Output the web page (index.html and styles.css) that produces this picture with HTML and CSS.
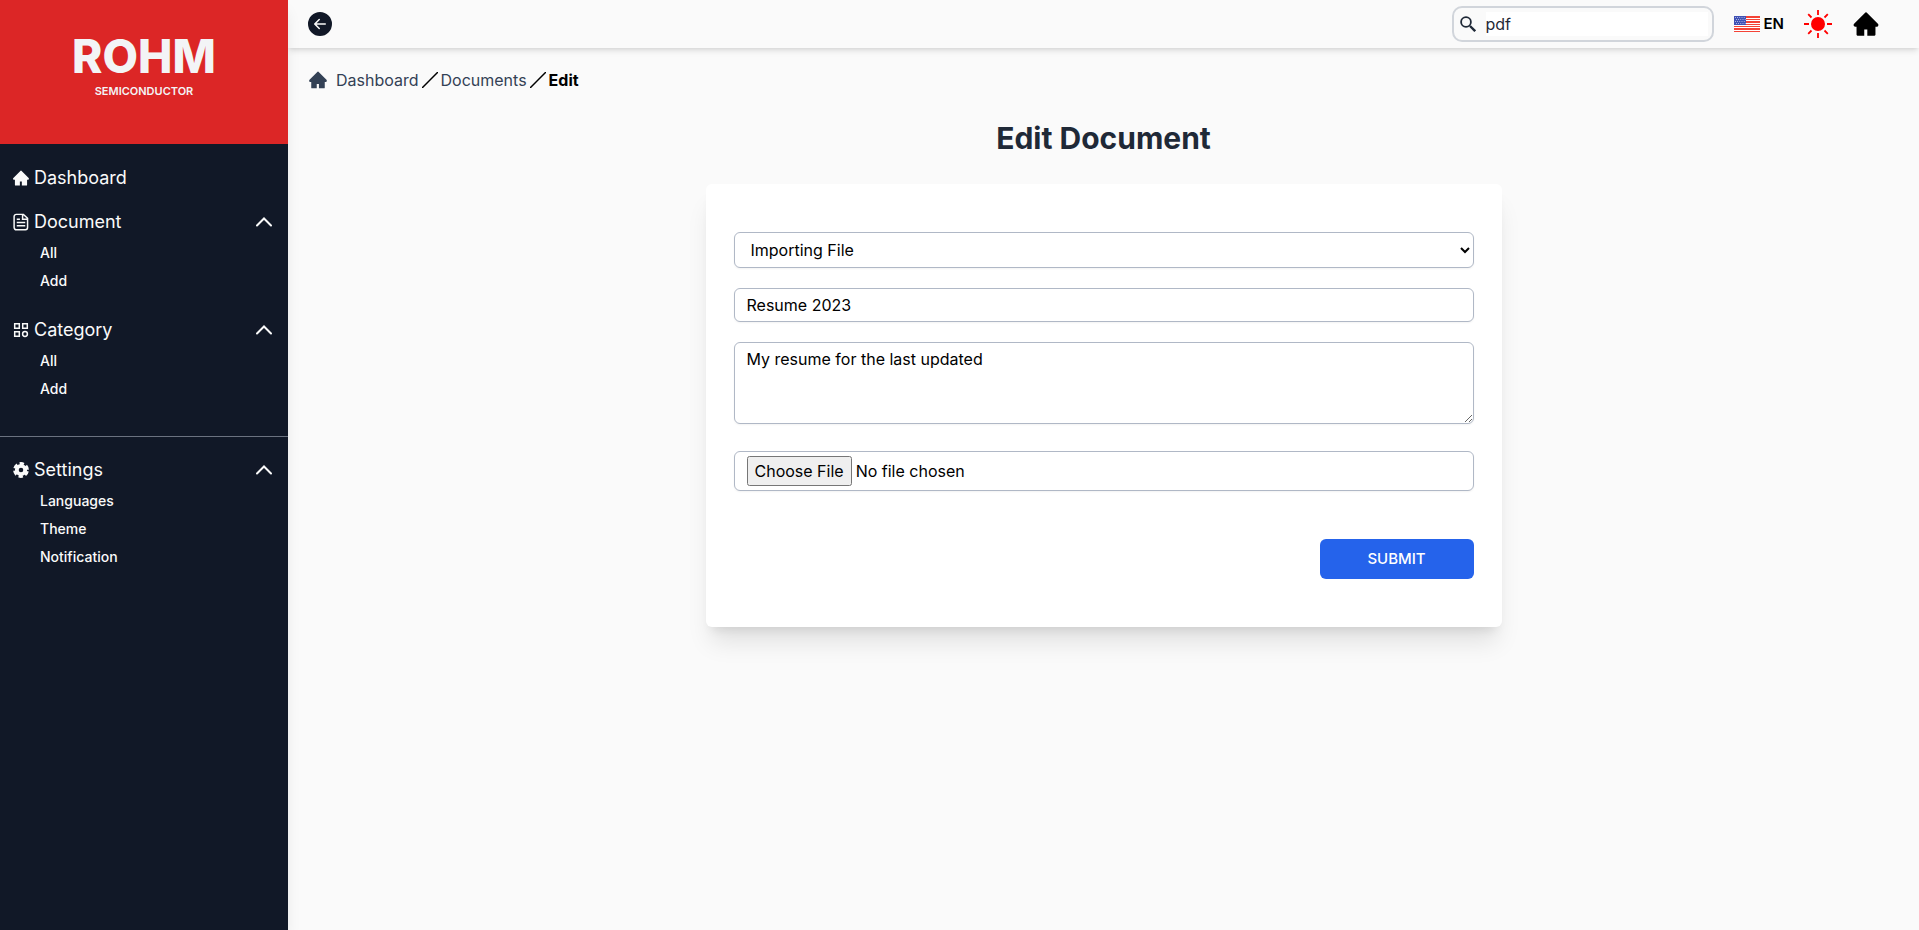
FILE: index.html
```html
<!DOCTYPE html>
<html lang="en">
<head>
<meta charset="utf-8">
<title>Edit Document</title>
<link rel="stylesheet" href="styles.css">
</head>
<body>
<svg class="sprite" aria-hidden="true">
  <symbol id="home" viewBox="0 0 1024 1024"><path d="M946.5 505L534.6 93.4a31.93 31.93 0 0 0-45.2 0L77.5 505c-12 12-18.8 28.3-18.8 45.3 0 35.3 28.7 64 64 64h43.4V908c0 17.7 14.3 32 32 32H448V716h112v224h265.9c17.7 0 32-14.3 32-32V614.3h43.4c17 0 33.3-6.7 45.3-18.8 24.9-25 24.9-65.5-.1-90.5z"/></symbol>
  <symbol id="chevron" viewBox="0 0 16 10"><path d="M1 8.500 8 1.500l7 7" fill="none" stroke="currentColor" stroke-width="2" stroke-linecap="round"/></symbol>
  <symbol id="slash" viewBox="0 0 16 16"><path d="M0 16 16 0" fill="none" stroke="currentColor" stroke-width="1.500"/></symbol>
</svg>
<div class="app">
  <aside class="sidebar">
    <div class="brand">
      <span class="brand-name">ROHM</span>
      <span class="brand-sub">SEMICONDUCTOR</span>
    </div>
    <nav class="nav">
      <a class="nav-head" href="#"><svg class="nav-icon"><use href="#home"/></svg>Dashboard</a>
      <section class="group">
        <button class="nav-head" type="button">
          <svg class="nav-icon" viewBox="-.5 -.5 17 17" fill="none" stroke="currentColor"><path stroke-width="1.400" d="M3.500.8h6.800L14.200 4.500v8.800a2 2 0 0 1-2 2H3.500a2 2 0 0 1-2-2V2.800a2 2 0 0 1 2-2zM9.500 1v4.300H14M4 5.500h3M4 8.500h8M4 11.500h8"/></svg>Document<svg class="chevron"><use href="#chevron"/></svg>
        </button>
        <ul class="sub"><li><a href="#">All</a></li><li><a href="#">Add</a></li></ul>
      </section>
      <section class="group">
        <button class="nav-head" type="button">
          <svg class="nav-icon" viewBox="-1 -1 18 18" fill="none" stroke="currentColor" stroke-width="1.500"><path d="M1.700 1.700h4.600v4.600H1.700zM9.700 1.700h4.600v4.600H9.700zM1.700 9.700h4.600v4.600H1.700z"/><circle cx="12" cy="12" r="2.400"/></svg>Category<svg class="chevron"><use href="#chevron"/></svg>
        </button>
        <ul class="sub"><li><a href="#">All</a></li><li><a href="#">Add</a></li></ul>
      </section>
    </nav>
    <nav class="nav nav-settings">
      <section class="group">
        <button class="nav-head" type="button">
          <svg class="nav-icon" viewBox="-1 -1 18 18" fill="none" stroke="currentColor"><circle cx="8" cy="8" r="4.200" stroke-width="3.800"/><circle cx="8" cy="8" r="6.300" stroke-width="3.200" stroke-dasharray="4.200 2.398" stroke-dashoffset="-1.200"/></svg>Settings<svg class="chevron"><use href="#chevron"/></svg>
        </button>
        <ul class="sub"><li><a href="#">Languages</a></li><li><a href="#">Theme</a></li><li><a href="#">Notification</a></li></ul>
      </section>
    </nav>
  </aside>
  <div class="page">
    <header class="topbar">
      <button class="icon-btn" type="button" aria-label="Back">
        <svg class="back" viewBox="0 0 16 16"><path d="M8 0a8 8 0 1 0 0 16A8 8 0 0 0 8 0zm3.500 7.500a.5.500 0 0 1 0 1H5.707l2.147 2.146a.5.500 0 0 1-.708.708l-3-3a.5.500 0 0 1 0-.708l3-3a.5.500 0 1 1 .708.708L5.707 7.500H11.500z"/></svg>
      </button>
      <div class="tools">
        <label class="search">
          <svg class="search-icon" viewBox="0 0 16 16" fill="none" stroke="currentColor" stroke-width="1.800"><circle cx="6" cy="6" r="4.900"/><path stroke-width="2.400" d="m10 10 5.200 5.200"/></svg>
          <input type="text" value="pdf" aria-label="Search">
        </label>
        <button class="lang" type="button">
          <svg class="flag" viewBox="0 0 26 16"><path fill="#fff" d="M0 0h26v16H0z"/><path fill="#f44336" d="M0 0h26v2H0zM0 3h26v1H0zM0 5h26v2H0zM0 8h26v1H0zM0 10h26v1H0zM0 12h26v2H0zM0 15h26v1H0z"/><path fill="#3f51b5" d="M0 0h12v9H0z"/><path stroke="#fff" stroke-width=".7" stroke-dasharray=".8 1.400" d="M1 1.500h11M2 3.500h10M1 5.500h11M2 7.500h10"/></svg>EN
        </button>
        <button class="icon-btn" type="button" aria-label="Light theme">
          <svg class="sun" viewBox="0 0 28 28"><circle cx="14" cy="14" r="7" fill="red"/><path stroke="red" stroke-width="1.800" d="M14 0v5M14 23v5M0 14h5M23 14h5M4.200 4.200l3.300 3.300M20.500 20.500l3.300 3.300M4.200 23.800l3.300-3.300M20.500 7.500l3.300-3.300"/></svg>
        </button>
        <a class="home-link" href="#" aria-label="Home"><svg class="home"><use href="#home"/></svg></a>
      </div>
    </header>
    <main class="content">
      <nav class="crumbs" aria-label="Breadcrumb">
        <svg class="crumb-home"><use href="#home"/></svg>
        <a href="#">Dashboard</a>
        <svg class="slash"><use href="#slash"/></svg>
        <a href="#">Documents</a>
        <svg class="slash"><use href="#slash"/></svg>
        <strong>Edit</strong>
      </nav>
      <h1>Edit Document</h1>
      <form class="card">
        <select class="field field-select" aria-label="Category"><option>Importing File</option></select>
        <input class="field field-text" type="text" value="Resume 2023" aria-label="Title">
        <textarea class="field field-area" aria-label="Description">My resume for the last updated</textarea>
        <input class="field field-file" type="file" aria-label="File">
        <button class="submit" type="button">SUBMIT</button>
      </form>
    </main>
  </div>
</div>
</body>
</html>
```
FILE: styles.css
```css
* { box-sizing: border-box; }
body {
  margin: 0;
  font-family: Inter, "Liberation Sans", sans-serif;
  font-size: 16px;
  line-height: 24px;
  color: #000;
  background: #fafafa;
}
button, input, select, textarea { font: inherit; color: inherit; }
button { border: 0; padding: 0; background: none; }
a { color: inherit; text-decoration: none; }
svg { display: block; flex: none; fill: currentColor; }
.sprite { position: absolute; width: 0; height: 0; }

.app { display: flex; min-height: 100vh; }
.sidebar {
  flex: none;
  width: 288px;
  color: #fafafa;
  background: #111827;
  box-shadow: 0 10px 15px -3px rgba(0, 0, 0, .1), 0 4px 6px -4px rgba(0, 0, 0, .1);
  z-index: 1;
}
.brand {
  display: flex;
  flex-direction: column;
  align-items: center;
  justify-content: center;
  height: 144px;
  padding-bottom: 10px;
  color: #f3f4f6;
  background: #dc2626;
}
.brand-name { font-size: 46px; line-height: 48px; font-weight: 800; }
.brand-sub { font-size: 11px; line-height: 22px; font-weight: 600; }

.nav { display: flex; flex-direction: column; gap: 16px; padding: 20px 16px 28px 12px; }
.nav-settings { border-top: 1px solid #6b7280; padding-top: 19px; }
.nav-head {
  display: flex;
  align-items: center;
  gap: 4px;
  width: 100%;
  font-size: 18px;
  line-height: 28px;
}
.nav-icon { width: 18px; height: 18px; }
svg.nav-icon[fill="none"] { fill: none; }
.chevron { width: 16px; height: 10px; margin-left: auto; }
.sub { margin: 3px 0 5px; padding: 0 0 0 28px; list-style: none; font-size: 14px; line-height: 28px; font-weight: 500; }

.page { flex: 1; min-width: 0; }
.topbar {
  display: flex;
  align-items: center;
  justify-content: space-between;
  height: 48px;
  padding: 0 39px 0 20px;
  box-shadow: 0 4px 6px -1px rgba(0, 0, 0, .1), 0 2px 4px -2px rgba(0, 0, 0, .1);
}
.back { width: 24px; height: 24px; color: #111827; }
.tools { display: flex; align-items: center; gap: 20px; }
.search {
  display: flex;
  align-items: center;
  gap: 10px;
  width: 262px;
  height: 36px;
  padding: 0 4px 0 6px;
  border: 2px solid #d1d5db;
  border-radius: 10px;
  color: #1f2937;
}
.search-icon, .lang svg, .sun { fill: none; }
.search-icon { width: 16px; height: 16px; }
.search input { flex: 1; min-width: 0; height: 24px; padding: 0; border: 0; background: #fff; }
.lang { display: flex; align-items: center; gap: 4px; font-size: 15px; font-weight: 600; }
.flag { width: 26px; height: 16px; }
.sun { width: 28px; height: 28px; }
.home { width: 28px; height: 28px; }

.content { padding: 20px 20px 40px; }
.crumbs { display: flex; align-items: center; gap: 3px; color: #334155; }
.crumb-home { width: 20px; height: 20px; margin-right: 5px; }
.slash { width: 16px; height: 16px; color: #000; }
.crumbs strong { color: #000; }
h1 {
  margin: 28px 0;
  font-size: 30px;
  line-height: 36px;
  text-align: center;
  color: #1f2937;
}
.card {
  display: flex;
  flex-direction: column;
  gap: 20px;
  max-width: 796px;
  margin: 0 auto;
  padding: 48px 28px;
  border-radius: 6px;
  background: #fff;
  box-shadow: 0 20px 25px -5px rgba(0, 0, 0, .1), 0 8px 10px -6px rgba(0, 0, 0, .1);
}
.field {
  width: 100%;
  margin: 0;
  padding: 4px 12px;
  border: 1px solid #b0b8c6;
  border-radius: 6px;
  background: #fff;
  box-shadow: 0 1px 2px rgba(0, 0, 0, .05);
}
.field-select { height: 36px; }
.field-text { height: 34px; }
.field-area { height: 82px; }
.field-file { height: 40px; margin-top: 7px; }
.field-file::file-selector-button { height: 30px; font: inherit; }
.submit {
  align-self: flex-end;
  width: 154px;
  height: 40px;
  margin-top: 28px;
  border-radius: 6px;
  font-size: 15px;
  font-weight: 500;
  color: #fff;
  background: #2563eb;
}
```
